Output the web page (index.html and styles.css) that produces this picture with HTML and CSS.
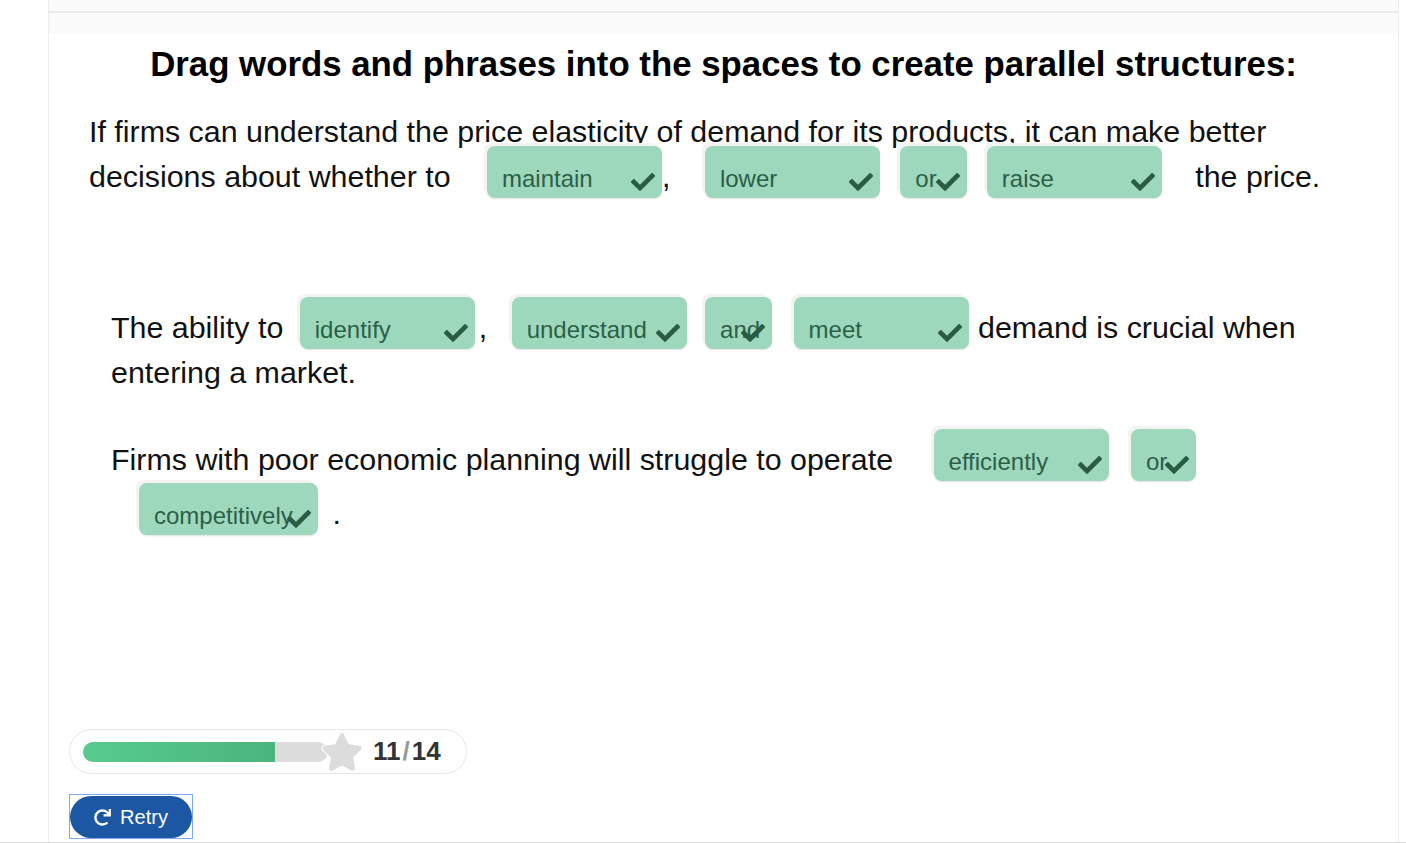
FILE: index.html
```html
<!DOCTYPE html>
<html lang="en">
<head>
<meta charset="utf-8">
<title>Parallel structures</title>
<link rel="stylesheet" href="styles.css">
</head>
<body>
<div class="page">
  <div class="frame">
    <div class="topline"></div>
    <div class="content">
      <h1 class="title">Drag words and phrases into the spaces to create parallel structures:</h1>

      <p class="para p1">If firms can understand the price elasticity of demand for its products, it can make better decisions about whether to <span class="zone wide ml28">maintain<svg class="check" viewBox="0 0 512 512"><path d="M173.9 439.4l-166.4-166.4c-10-10-10-26.2 0-36.2l36.2-36.2c10-10 26.2-10 36.2 0L192 312.7 432.1 72.6c10-10 26.2-10 36.2 0l36.2 36.2c10 10 10 26.2 0 36.2l-294.4 294.4c-10 10-26.2 10-36.2 0z"/></svg></span>, <span class="zone wide ml26">lower<svg class="check" viewBox="0 0 512 512"><path d="M173.9 439.4l-166.4-166.4c-10-10-10-26.2 0-36.2l36.2-36.2c10-10 26.2-10 36.2 0L192 312.7 432.1 72.6c10-10 26.2-10 36.2 0l36.2 36.2c10 10 10 26.2 0 36.2l-294.4 294.4c-10 10-26.2 10-36.2 0z"/></svg></span> <span class="zone small ml12">or<svg class="check" viewBox="0 0 512 512"><path d="M173.9 439.4l-166.4-166.4c-10-10-10-26.2 0-36.2l36.2-36.2c10-10 26.2-10 36.2 0L192 312.7 432.1 72.6c10-10 26.2-10 36.2 0l36.2 36.2c10 10 10 26.2 0 36.2l-294.4 294.4c-10 10-26.2 10-36.2 0z"/></svg></span> <span class="zone wide ml11 mr25">raise<svg class="check" viewBox="0 0 512 512"><path d="M173.9 439.4l-166.4-166.4c-10-10-10-26.2 0-36.2l36.2-36.2c10-10 26.2-10 36.2 0L192 312.7 432.1 72.6c10-10 26.2-10 36.2 0l36.2 36.2c10 10 10 26.2 0 36.2l-294.4 294.4c-10 10-26.2 10-36.2 0z"/></svg></span> the price.</p>

      <p class="para p2">The ability to <span class="zone wide ml8 mr4">identify<svg class="check" viewBox="0 0 512 512"><path d="M173.9 439.4l-166.4-166.4c-10-10-10-26.2 0-36.2l36.2-36.2c10-10 26.2-10 36.2 0L192 312.7 432.1 72.6c10-10 26.2-10 36.2 0l36.2 36.2c10 10 10 26.2 0 36.2l-294.4 294.4c-10 10-26.2 10-36.2 0z"/></svg></span>, <span class="zone wide ml16">understand<svg class="check" viewBox="0 0 512 512"><path d="M173.9 439.4l-166.4-166.4c-10-10-10-26.2 0-36.2l36.2-36.2c10-10 26.2-10 36.2 0L192 312.7 432.1 72.6c10-10 26.2-10 36.2 0l36.2 36.2c10 10 10 26.2 0 36.2l-294.4 294.4c-10 10-26.2 10-36.2 0z"/></svg></span> <span class="zone small ml10">and<svg class="check" viewBox="0 0 512 512"><path d="M173.9 439.4l-166.4-166.4c-10-10-10-26.2 0-36.2l36.2-36.2c10-10 26.2-10 36.2 0L192 312.7 432.1 72.6c10-10 26.2-10 36.2 0l36.2 36.2c10 10 10 26.2 0 36.2l-294.4 294.4c-10 10-26.2 10-36.2 0z"/></svg></span> <span class="zone wide ml13 mr1">meet<svg class="check" viewBox="0 0 512 512"><path d="M173.9 439.4l-166.4-166.4c-10-10-10-26.2 0-36.2l36.2-36.2c10-10 26.2-10 36.2 0L192 312.7 432.1 72.6c10-10 26.2-10 36.2 0l36.2 36.2c10 10 10 26.2 0 36.2l-294.4 294.4c-10 10-26.2 10-36.2 0z"/></svg></span> demand is crucial when entering a market.</p>

      <p class="para p3">Firms with poor economic planning will struggle to operate <span class="zone wide ml32">efficiently<svg class="check" viewBox="0 0 512 512"><path d="M173.9 439.4l-166.4-166.4c-10-10-10-26.2 0-36.2l36.2-36.2c10-10 26.2-10 36.2 0L192 312.7 432.1 72.6c10-10 26.2-10 36.2 0l36.2 36.2c10 10 10 26.2 0 36.2l-294.4 294.4c-10 10-26.2 10-36.2 0z"/></svg></span> <span class="zone small narrow ml14">or<svg class="check" viewBox="0 0 512 512"><path d="M173.9 439.4l-166.4-166.4c-10-10-10-26.2 0-36.2l36.2-36.2c10-10 26.2-10 36.2 0L192 312.7 432.1 72.6c10-10 26.2-10 36.2 0l36.2 36.2c10 10 10 26.2 0 36.2l-294.4 294.4c-10 10-26.2 10-36.2 0z"/></svg></span> <span class="zone xwide ml28 mr6">competitively<svg class="check" viewBox="0 0 512 512"><path d="M173.9 439.4l-166.4-166.4c-10-10-10-26.2 0-36.2l36.2-36.2c10-10 26.2-10 36.2 0L192 312.7 432.1 72.6c10-10 26.2-10 36.2 0l36.2 36.2c10 10 10 26.2 0 36.2l-294.4 294.4c-10 10-26.2 10-36.2 0z"/></svg></span> .</p>
    </div>

    <div class="footer">
      <div class="progress">
        <div class="track"><div class="fill"></div></div>
        <svg class="star" viewBox="0 0 576 512"><path d="M259.3 17.8L194 150.2 47.9 171.5c-26.2 3.8-36.7 36.1-17.7 54.6l105.7 103-25 145.5c-4.5 26.3 23.2 46 46.4 33.7L288 439.6l130.7 68.7c23.2 12.2 50.9-7.4 46.4-33.7l-25-145.5 105.7-103c19-18.5 8.5-50.8-17.7-54.6L382 150.2 316.7 17.8c-11.7-23.6-45.6-23.9-57.4 0z"/></svg>
        <div class="score"><span>11</span><span class="slash">/</span><span>14</span></div>
      </div>
      <div class="retry-wrap">
        <button class="retry"><svg class="redo" viewBox="0 0 512 512"><path d="M500.3 0h-47.4a12 12 0 0 0-12 12.6l4 82.8A247.4 247.4 0 0 0 256 8C119.3 8 7.9 119.5 8 256.2 8.1 393.1 119.1 504 256 504a247.1 247.1 0 0 0 166.2-63.9 12 12 0 0 0 .5-17.4l-34-34a12 12 0 0 0-16.4-.6A176 176 0 1 1 402.1 157.8l-101.5-4.9a12 12 0 0 0-12.6 12v47.4a12 12 0 0 0 12 12h200.3a12 12 0 0 0 12-12V12a12 12 0 0 0-12-12z"/></svg>Retry</button>
      </div>
    </div>
  </div>
</div>
</body>
</html>
```

FILE: styles.css
```css
html, body {
  margin: 0;
  padding: 0;
  background: #fff;
}
body {
  font-family: "Liberation Sans", Arial, sans-serif;
  color: #111;
}
.page {
  height: 842px;
  border-bottom: 1px solid #d9d9d9;
  overflow: hidden;
}
.frame {
  margin-left: 48px;
  width: 1349px;
  height: 842px;
  border-left: 1px solid #ededed;
  border-right: 1px solid #ededed;
  display: flex;
  flex-direction: column;
  background: linear-gradient(#fbfbfb 0, #fbfbfb 11px, #fff 11px);
}
.topline {
  margin-top: 11px;
  height: 2px;
  background: #ebebeb;
}
.content {
  padding: 0 40px;
  background: linear-gradient(#fafafa 0, #fafafa 20px, #fff 20px);
}
.title {
  margin: 31px 0 0 0;
  text-align: center;
  font-size: 34.8px;
  line-height: 40px;
  font-weight: bold;
  color: #000;
}
.para {
  margin: 0;
  font-size: 30.4px;
  line-height: 45px;
  color: #111;
}
.p1 {
  margin-top: 25px;
}
.p2 {
  margin-top: 106px;
  padding-left: 22px;
}
.p3 {
  margin-top: 34px;
  padding-left: 22px;
}
.zone {
  display: inline-block;
  position: relative;
  box-sizing: border-box;
  height: 52px;
  margin-top: -10px;
  padding: 20px 15px 6px 15px;
  border-radius: 8px;
  background: #9dd8bd;
  color: #2c5f47;
  font-size: 24px;
  line-height: 26px;
  box-shadow: -3px -3px 0 0 #f3f3f3, 0 1px 2px rgba(0, 0, 0, 0.12);
  white-space: nowrap;
}
.p3 .zone {
  margin-top: 0;
  margin-bottom: 2px;
}
.zone.wide { width: 175px; }
.zone.xwide { width: 179px; }
.zone.small { width: 67px; }
.zone.small.narrow { width: 65px; }
.check {
  position: absolute;
  right: 7px;
  bottom: 4px;
  width: 24px;
  height: 24px;
  fill: #2a5b43;
}
.ml8 { margin-left: 8px; }
.ml10 { margin-left: 10px; }
.ml11 { margin-left: 11px; }
.ml12 { margin-left: 12px; }
.ml13 { margin-left: 13px; }
.ml14 { margin-left: 14px; }
.ml16 { margin-left: 16px; }
.ml26 { margin-left: 26px; }
.ml28 { margin-left: 28px; }
.ml32 { margin-left: 32px; }
.mr1 { margin-right: 1px; }
.mr4 { margin-right: 4px; }
.mr6 { margin-right: 6px; }
.mr25 { margin-right: 25px; }

.footer {
  margin-top: auto;
  padding: 0 0 3px 20px;
}
.progress {
  box-sizing: border-box;
  width: 398px;
  height: 45px;
  border: 1px solid #e6e6e6;
  border-radius: 23px;
  display: flex;
  align-items: center;
  padding-left: 13px;
}
.track {
  width: 245px;
  height: 20px;
  border-radius: 10px;
  background: #dcdcdc;
  overflow: hidden;
}
.fill {
  width: 192px;
  height: 100%;
  background: linear-gradient(90deg, #57cb8d, #4bb57f);
}
.star {
  width: 42px;
  height: 38px;
  margin-left: -7px;
  fill: #dcdcdc;
  stroke: #fff;
  stroke-width: 30px;
  paint-order: stroke;
}
.score {
  margin-left: 10px;
  font-size: 26px;
  font-weight: bold;
  color: #333;
}
.slash {
  color: #999;
  margin: 0 2px;
}
.retry-wrap {
  margin-top: 20px;
  width: 124px;
  height: 45px;
  box-sizing: border-box;
  border: 1px solid #7da8f2;
  padding-top: 1px;
}
.retry {
  display: flex;
  align-items: center;
  justify-content: center;
  gap: 9px;
  width: 122px;
  height: 42px;
  border: none;
  border-radius: 21px;
  background: #1b57a2;
  color: #fff;
  font-family: "Liberation Sans", Arial, sans-serif;
  font-size: 20px;
  padding: 0;
}
.redo {
  width: 17px;
  height: 17px;
  fill: #fff;
}
```
